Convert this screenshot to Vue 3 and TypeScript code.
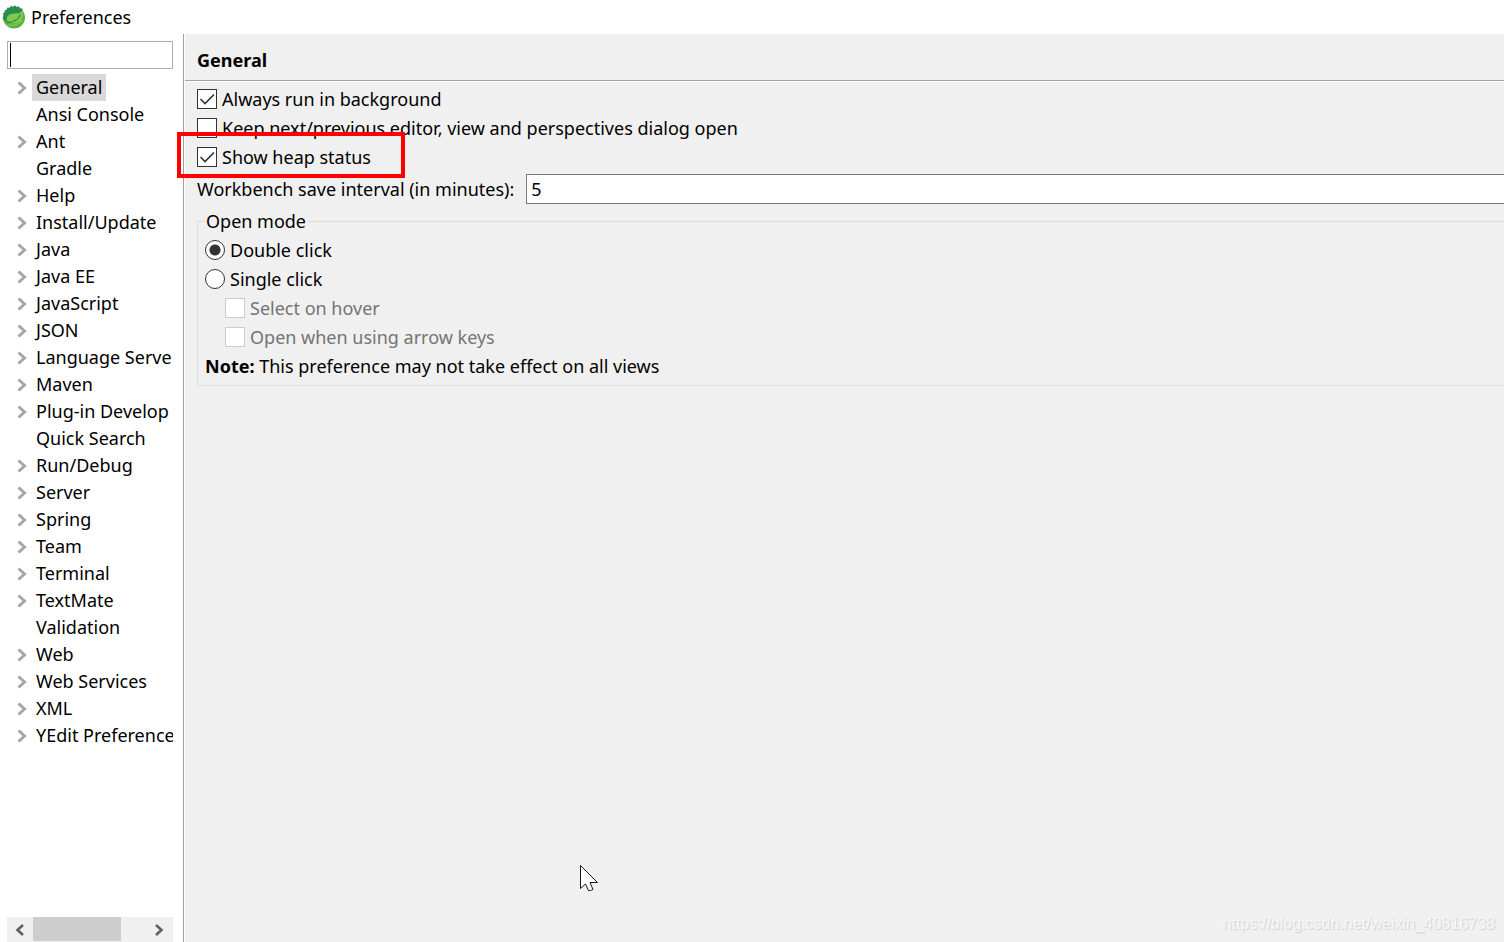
<script setup lang="ts">
import { ref } from 'vue'

interface TreeNode {
  label: string
  leaf?: boolean
}

const nodes: TreeNode[] = [
  { label: 'General' },
  { label: 'Ansi Console', leaf: true },
  { label: 'Ant' },
  { label: 'Gradle', leaf: true },
  { label: 'Help' },
  { label: 'Install/Update' },
  { label: 'Java' },
  { label: 'Java EE' },
  { label: 'JavaScript' },
  { label: 'JSON' },
  { label: 'Language Serve' },
  { label: 'Maven' },
  { label: 'Plug-in Develop' },
  { label: 'Quick Search', leaf: true },
  { label: 'Run/Debug' },
  { label: 'Server' },
  { label: 'Spring' },
  { label: 'Team' },
  { label: 'Terminal' },
  { label: 'TextMate' },
  { label: 'Validation', leaf: true },
  { label: 'Web' },
  { label: 'Web Services' },
  { label: 'XML' },
  { label: 'YEdit Preference' },
]

const selected = ref('General')
const filter = ref('')
const runInBackground = ref(true)
const keepDialogOpen = ref(false)
const showHeap = ref(true)
const interval = ref('5')
const openMode = ref('double')
const selectOnHover = ref(false)
const openWithArrows = ref(false)
</script>

<template>
  <div class="window">
    <header class="titlebar">
      <svg class="logo" viewBox="0 0 24 24" aria-hidden="true">
        <circle cx="12" cy="12.500" r="11" fill="#5cb040" />
        <path d="M0.500 13L2 10L0.800 8.500L3 7.500L2.500 5.500L5 5L5.200 2.500L8 3L9 0.500L11 2L13 0.200L14.500 2L17 1.200L18 3.500L20.500 3.500L20.500 6L17 8L8 9L5 12L4 17L2 15Z" fill="#2b8c50" />
        <path d="M20.500 5.500C22 12 20 17 14 18C9 18.800 5 17 5 13.500C5 10 9 8.800 13 8.800C16.500 8.800 19 8 20.500 5.500Z" fill="#7fc94e" />
        <path d="M5 17.500C11 17.500 16 15 18.500 9.500" fill="none" stroke="#2f8f48" stroke-width="1.300" />
        <path d="M5 19.500C10 21.500 17 20 20.500 15" fill="none" stroke="#7cc44c" stroke-width="1.500" />
      </svg>
      <span>Preferences</span>
    </header>

    <div class="body">
      <aside class="sidebar">
        <div class="search">
          <input v-model="filter" type="text" aria-label="Filter preferences" />
          <span class="caret"></span>
        </div>
        <ul class="tree">
          <li v-for="node in nodes" :key="node.label">
            <span class="twisty">
              <svg v-if="!node.leaf" viewBox="0 0 10 14" aria-hidden="true">
                <path d="M1.500 1.500L7.500 7L1.500 12.500" fill="none" stroke="#a6a6a6" stroke-width="3" />
              </svg>
            </span>
            <button
              type="button"
              class="node"
              :class="{ selected: selected === node.label }"
              @click="selected = node.label"
            >{{ node.label }}</button>
          </li>
        </ul>
        <div class="scrollbar">
          <button type="button" class="arrow" aria-label="Scroll left">
            <svg viewBox="0 0 10 12" aria-hidden="true">
              <path d="M8 1L2.500 6L8 11" fill="none" stroke="#606060" stroke-width="2.600" />
            </svg>
          </button>
          <div class="track"><div class="thumb"></div></div>
          <button type="button" class="arrow" aria-label="Scroll right">
            <svg viewBox="0 0 10 12" aria-hidden="true">
              <path d="M1 1L6.500 6L1 11" fill="none" stroke="#606060" stroke-width="2.600" />
            </svg>
          </button>
        </div>
      </aside>

      <main class="page">
        <h1>General</h1>
        <div class="content">
          <label class="option">
            <input v-model="runInBackground" type="checkbox" />
            <span>Always run in background</span>
          </label>
          <label class="option">
            <input v-model="keepDialogOpen" type="checkbox" />
            <span>Keep next/previous editor, view and perspectives dialog open</span>
          </label>
          <div class="marked">
            <label class="option">
              <input v-model="showHeap" type="checkbox" />
              <span>Show heap status</span>
            </label>
            <div class="highlight"></div>
          </div>
          <div class="field">
            <label for="interval">Workbench save interval (in minutes):</label>
            <input id="interval" v-model="interval" type="text" />
          </div>
          <fieldset>
            <legend>Open mode</legend>
            <label class="option">
              <input v-model="openMode" type="radio" name="open-mode" value="double" />
              <span>Double click</span>
            </label>
            <label class="option">
              <input v-model="openMode" type="radio" name="open-mode" value="single" />
              <span>Single click</span>
            </label>
            <label class="option nested">
              <input v-model="selectOnHover" type="checkbox" disabled />
              <span>Select on hover</span>
            </label>
            <label class="option nested">
              <input v-model="openWithArrows" type="checkbox" disabled />
              <span>Open when using arrow keys</span>
            </label>
            <p class="note"><b>Note:</b> This preference may not take effect on all views</p>
          </fieldset>
        </div>
      </main>
    </div>

    <svg class="pointer" viewBox="0 0 20 28" aria-hidden="true">
      <path d="M1.500 1.500V24.500L6.500 20L9.500 26.500H11.500L14 25.500L11 18.500H18.500Z" fill="#fff" stroke="#15152a" stroke-width="1" />
    </svg>
    <span class="watermark">https://blog.csdn.net/weixin_40816738</span>
  </div>
</template>

<style>
body {
  margin: 0;
}
</style>

<style scoped>
* {
  box-sizing: border-box;
}

.window {
  position: relative;
  display: flex;
  flex-direction: column;
  height: 100vh;
  overflow: hidden;
  background: #fff;
  color: #000;
  font: 18px/28px "Noto Sans", "Open Sans", sans-serif;
}

button,
input {
  margin: 0;
  font: inherit;
  color: inherit;
}

.titlebar {
  display: flex;
  align-items: center;
  gap: 5px;
  flex: none;
  height: 34px;
  padding-left: 2px;
}

.logo {
  width: 24px;
  height: 24px;
}

.body {
  display: flex;
  flex: 1;
  min-height: 0;
}

.sidebar {
  display: flex;
  flex-direction: column;
  flex: none;
  width: 183px;
  padding: 7px 10px 0 7px;
}

.search {
  position: relative;
  flex: none;
  height: 28px;
}

.search input {
  display: block;
  width: 100%;
  height: 100%;
  padding: 0 4px;
  border: 1px solid #abadb3;
  border-radius: 0;
  outline: none;
  background: #fff;
}

.caret {
  position: absolute;
  left: 3px;
  top: 2px;
  width: 1px;
  height: 24px;
  background: #000;
}

.tree {
  flex: 1;
  min-height: 0;
  margin: 5px 0 0;
  padding: 0;
  overflow: hidden;
  list-style: none;
}

.tree li {
  display: flex;
  align-items: center;
  height: 27px;
}

.twisty {
  display: flex;
  flex: none;
  width: 25px;
  padding: 1px 0 0 10px;
}

.twisty svg {
  width: 10px;
  height: 14px;
}

.node {
  flex: none;
  height: 27px;
  padding: 0 4px;
  border: 0;
  background: none;
  line-height: 27px;
  white-space: nowrap;
}

.node.selected {
  background: #d9d9d9;
}

.scrollbar {
  display: flex;
  flex: none;
  height: 25px;
  background: #f0f0f0;
}

.arrow {
  display: flex;
  align-items: center;
  justify-content: center;
  width: 26px;
  padding: 0;
  border: 0;
  background: none;
}

.arrow svg {
  width: 10px;
  height: 12px;
}

.track {
  flex: 1;
}

.thumb {
  width: 77%;
  height: 24px;
  background: #cdcdcd;
}

.page {
  flex: 1;
  min-width: 0;
  border-left: 1px solid #a0a0a0;
  background: #f0f0f0;
  box-shadow: inset 1px 0 #fff;
}

h1 {
  height: 47px;
  margin: 0 0 0 1px;
  padding: 12px 0 0 12px;
  border-bottom: 1px solid #a0a0a0;
  box-shadow: 0 1px #fff;
  font-size: 18px;
  font-weight: 700;
  line-height: 28px;
}

.content {
  padding: 3px 0 0 13px;
}

.option {
  display: flex;
  align-items: center;
  gap: 5px;
  width: fit-content;
  height: 29px;
  white-space: nowrap;
}

.option input {
  flex: none;
  width: 20px;
  height: 20px;
  border: 1px solid #333;
  background: #fff;
  appearance: none;
}

.option input[type="checkbox"]:checked {
  background: #fff url("data:image/svg+xml,%3Csvg xmlns='http://www.w3.org/2000/svg' viewBox='0 0 18 18'%3E%3Cpath d='M2.500 9L7 13.500L16 4.500' fill='none' stroke='%23333' stroke-width='1.600'/%3E%3C/svg%3E") center / 18px 18px no-repeat;
}

.option input[type="radio"] {
  border-radius: 50%;
}

.option input[type="radio"]:checked {
  background: radial-gradient(circle, #333 5px, #fff 6px);
}

.nested {
  margin-left: 20px;
  color: #747474;
}

.option input:disabled {
  border-color: #ccc;
}

.marked {
  position: relative;
  width: fit-content;
}

.highlight {
  position: absolute;
  left: -20px;
  right: -34px;
  top: -10px;
  bottom: -7px;
  border: 4px solid #fe0000;
  pointer-events: none;
}

.field {
  display: flex;
  align-items: center;
  gap: 12px;
  margin: 3px 0;
}

.field input {
  flex: 1;
  min-width: 0;
  height: 30px;
  padding: 0 4px;
  border: 1px solid #7a7a7a;
  border-right: 0;
  border-radius: 0;
  outline: none;
  background: #fff;
}

fieldset {
  min-width: 0;
  margin: 0;
  padding: 0 0 3px 7px;
  border: 1px solid #dcdcdc;
  border-right: 0;
}

legend {
  height: 28px;
  margin-left: -1px;
  padding: 0 2px;
}

.note {
  margin: 0;
  line-height: 31px;
}

.pointer {
  position: absolute;
  left: 579px;
  top: 864px;
  width: 20px;
  height: 28px;
}

.watermark {
  position: absolute;
  right: 9px;
  bottom: 8px;
  color: #f8f8f8;
  font: 16px/20px "Liberation Sans", Arial, sans-serif;
  text-shadow: 1px 1px 1px #ccc;
}
</style>
